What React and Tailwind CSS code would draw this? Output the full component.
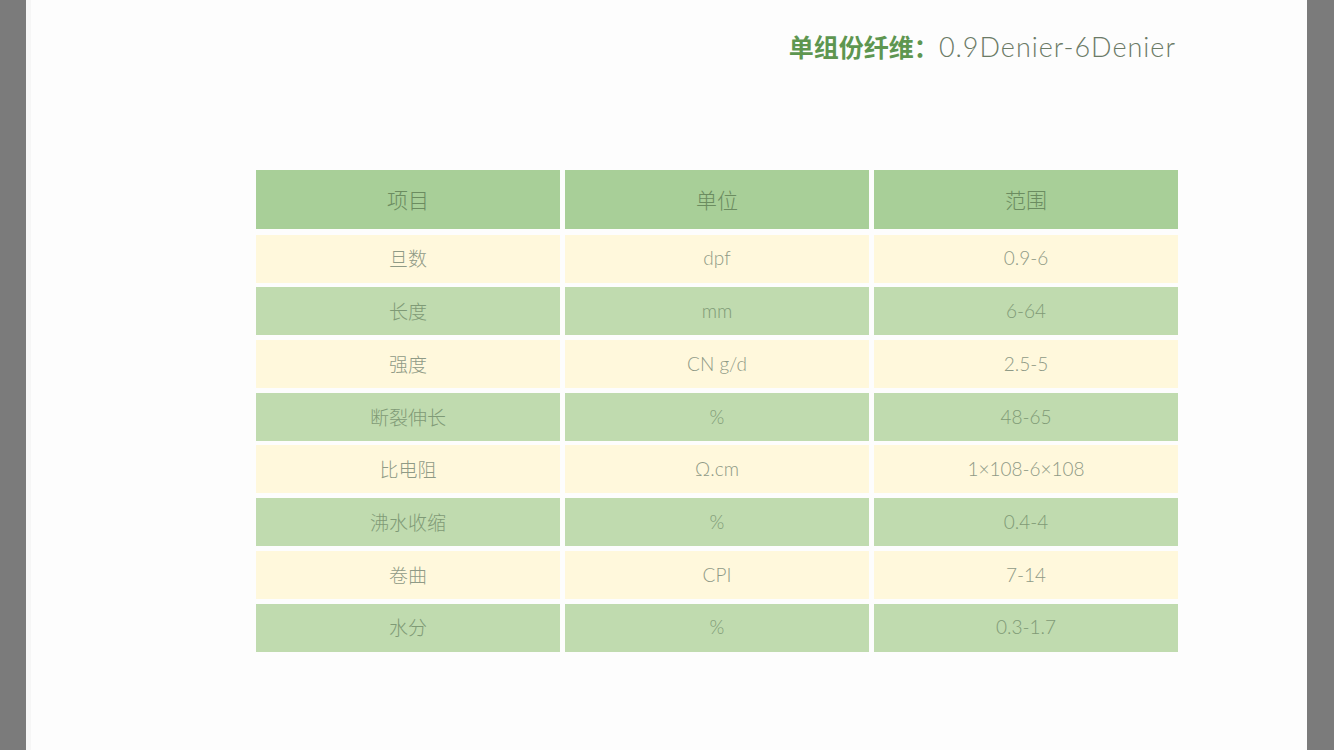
export default function App() {
  const rows = [
    ["旦数", "dpf", "0.9-6"],
    ["长度", "mm", "6-64"],
    ["强度", "CN g/d", "2.5-5"],
    ["断裂伸长", "%", "48-65"],
    ["比电阻", "Ω.cm", "1×108-6×108"],
    ["沸水收缩", "%", "0.4-4"],
    ["卷曲", "CPI", "7-14"],
    ["水分", "%", "0.3-1.7"],
  ];
  const font = { fontFamily: '"Lato", "Noto Sans CJK SC", sans-serif' };
  const cjk = { fontFamily: '"Noto Sans CJK SC", sans-serif', fontWeight: 300 };
  return (
    <div className="w-full h-[750px] bg-[#7b7b7b] flex pl-[26px] overflow-hidden" style={font}>
      <div className="w-[1281px] h-full bg-[#fdfdfd] flex flex-col border-l-[5px] border-[#f6f6f6]">
        <div className="flex justify-end items-baseline pr-[131px] pt-[27px] leading-[38px]">
          <span className="font-bold text-[25px] text-[#5e9650]" style={{ fontFamily: '"Noto Sans CJK SC", sans-serif' }}>单组份纤维：</span>
          <span className="text-[27px] text-[#6b7a66] font-light tracking-[1px]">0.9Denier-6Denier</span>
        </div>
        <div className="ml-[225px] mt-[104px] w-[922px] flex flex-col gap-[4.7px] text-[19px]">
          <div className="grid grid-cols-3 gap-x-[5px] mb-[1px]">
            {["项目", "单位", "范围"].map((h) => (
              <div key={h} className="h-[59px] bg-[#a8cf98] flex items-center justify-center text-[21px] text-[#6b8c60]" style={cjk}>
                {h}
              </div>
            ))}
          </div>
          {rows.map((r, i) => (
            <div key={i} className="grid grid-cols-3 gap-x-[5px]">
              {r.map((c, j) => (
                <div
                  key={j}
                  className={`h-[48px] flex items-center justify-center font-light ${i % 2 === 0 ? "bg-[#fff8dc] text-[#8f9a86]" : "bg-[#c0dbaf] text-[#7f9a76]"}`}
                  style={j === 0 ? cjk : undefined}
                >
                  {c}
                </div>
              ))}
            </div>
          ))}
        </div>
      </div>
    </div>
  );
}
